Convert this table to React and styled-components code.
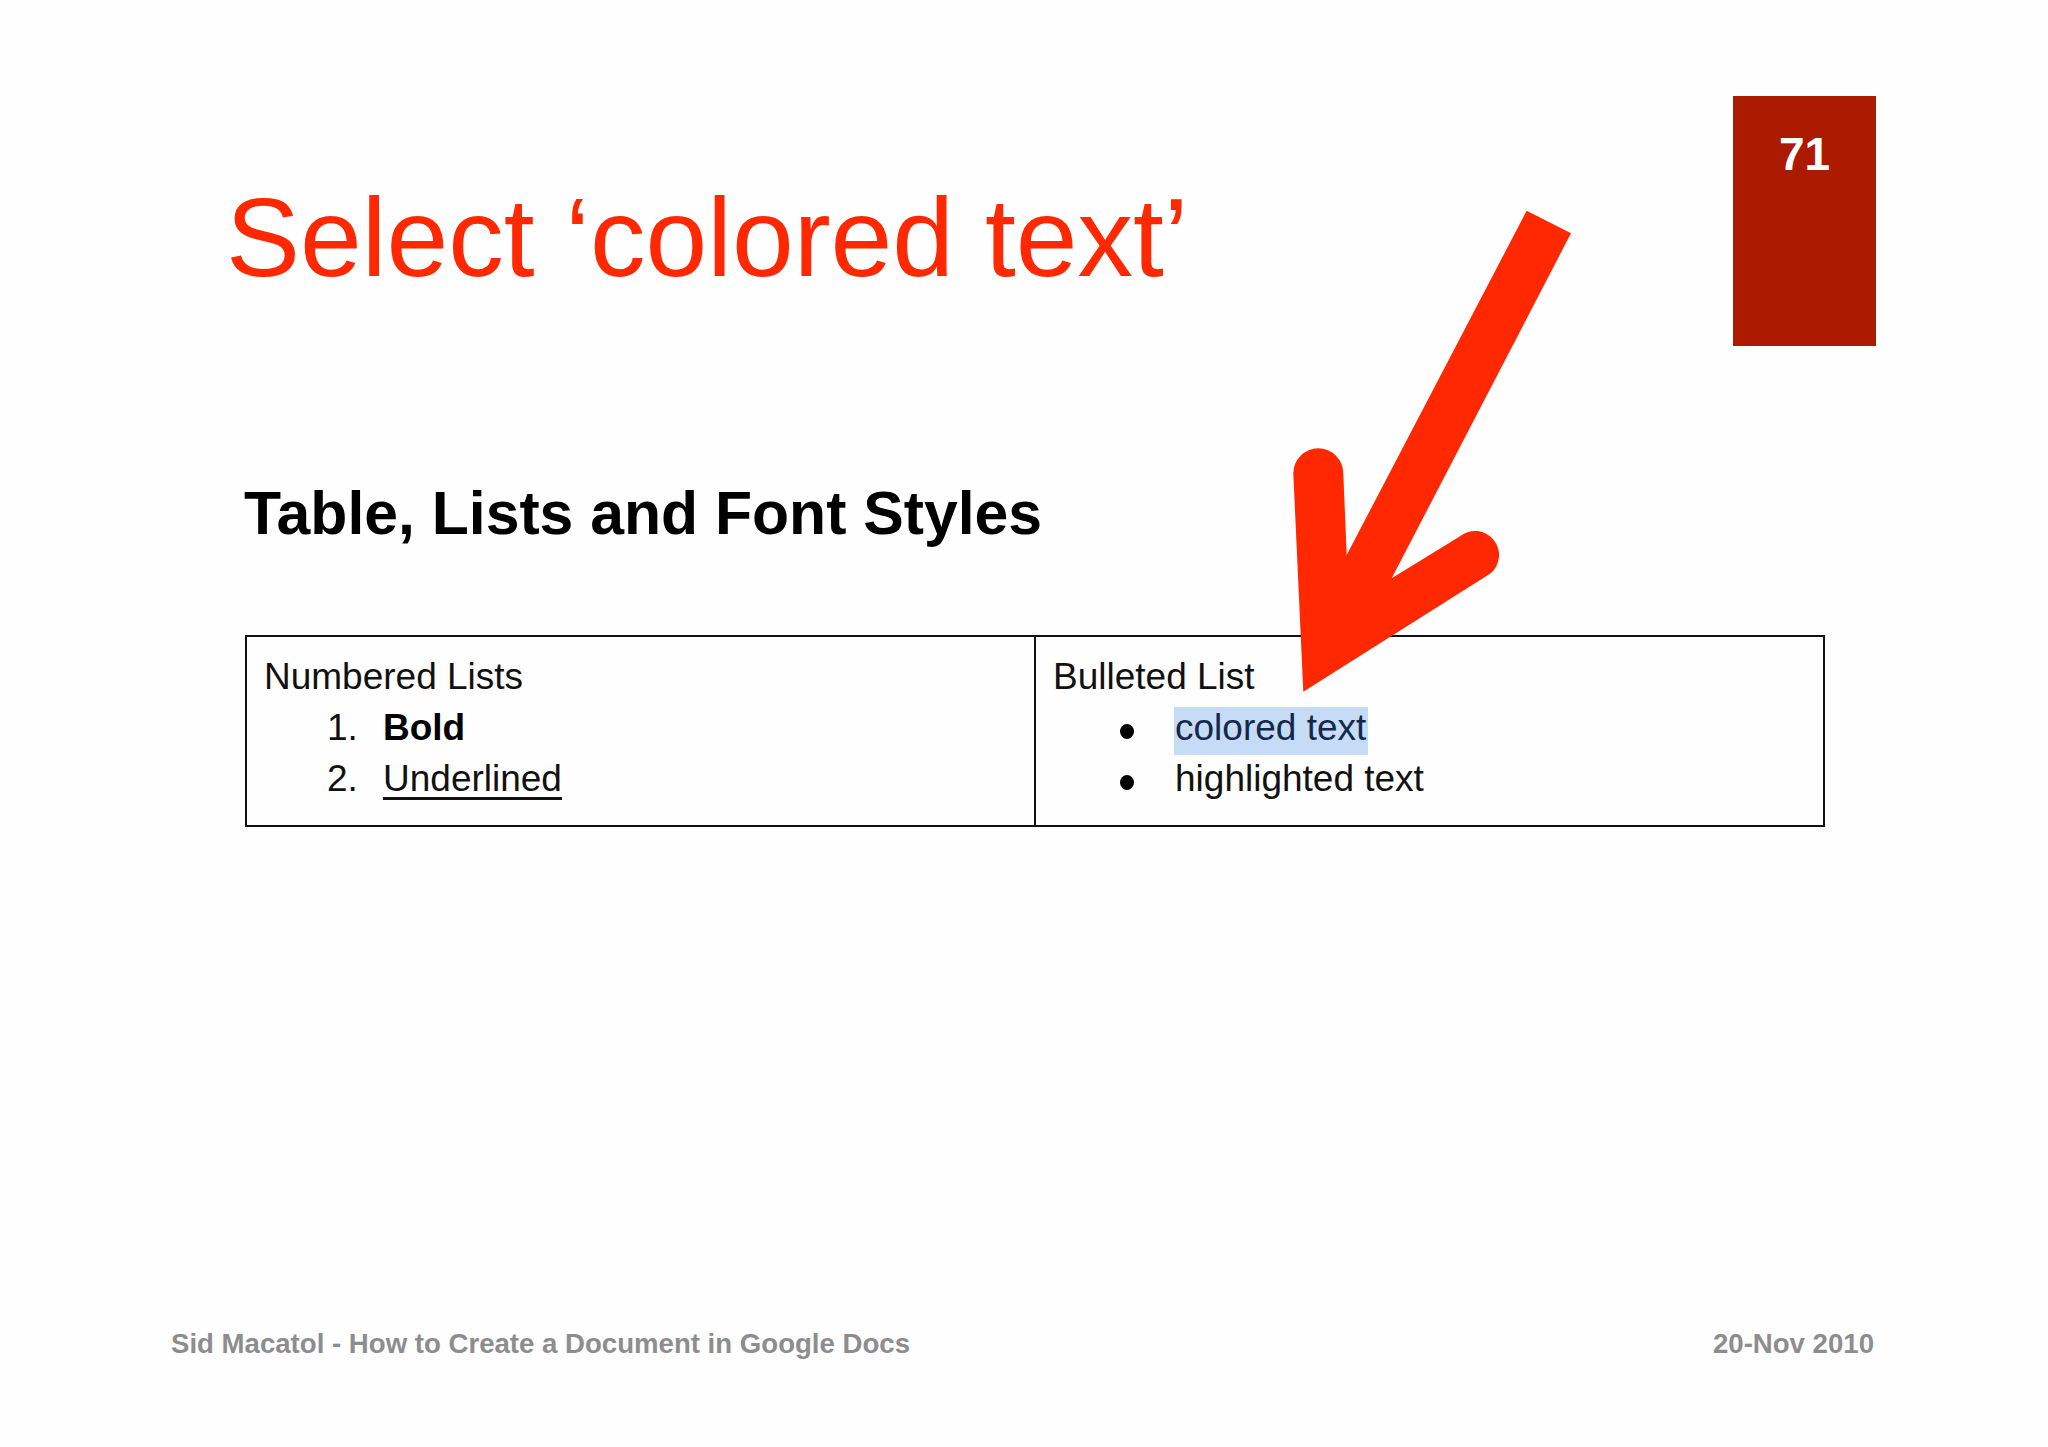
import React from "react";
import styled, { createGlobalStyle } from "styled-components";

const GlobalStyle = createGlobalStyle`
  html, body {
    margin: 0;
    padding: 0;
    background: #fefefe;
  }
  body {
    font-family: "Liberation Sans", Arial, sans-serif;
  }
`;

const Slide = styled.div`
  position: relative;
  width: 2048px;
  height: 1447px;
  box-sizing: border-box;
  display: flex;
  flex-direction: column;
  background: #fefefe;
  overflow: hidden;
`;

const Header = styled.div`
  display: flex;
  justify-content: space-between;
  align-items: flex-start;
  padding: 0 172px 0 226px;
`;

const Title = styled.h1`
  margin: 182px 0 0 0;
  font-size: 111px;
  line-height: 112px;
  font-weight: 400;
  color: #ff2800;
  white-space: nowrap;
`;

const PageNumber = styled.div`
  margin-top: 96px;
  width: 143px;
  height: 250px;
  box-sizing: border-box;
  padding-top: 35px;
  background: #ac1a02;
  color: #fff;
  font-size: 46px;
  line-height: 46px;
  font-weight: 700;
  text-align: center;
`;

const Heading = styled.h2`
  margin: 137px 0 0 244px;
  font-size: 60.7px;
  line-height: 60px;
  font-weight: 700;
  color: #000;
  white-space: nowrap;
`;

const Table = styled.div`
  margin: 92px 0 0 245px;
  width: 1580px;
  height: 192px;
  box-sizing: border-box;
  border: 2px solid #111;
  display: grid;
  grid-template-columns: 787px 1fr;
`;

const Cell = styled.div`
  padding: 14px 0 0 17px;
  font-size: 37px;
  line-height: 51px;
  color: #111;
  border-left: ${(p) => (p.divider ? "2px solid #111" : "none")};
`;

const CellTitle = styled.div`
  white-space: nowrap;
`;

const Item = styled.div`
  display: flex;
  align-items: baseline;
  height: 51px;
  padding-left: ${(p) => p.indent}px;
  white-space: nowrap;
`;

const Marker = styled.span`
  display: inline-block;
  width: ${(p) => p.width}px;
  flex: none;
`;

const Label = styled.span`
  display: block;
`;

const Dot = styled.span`
  display: inline-block;
  width: 14px;
  height: 15px;
  border-radius: 50%;
  background: #000;
  margin-left: 1px;
  vertical-align: 1px;
`;

const BoldText = styled.span`
  font-weight: 700;
  color: #000;
`;

const Underlined = styled.span`
  text-decoration: underline;
  text-decoration-thickness: 3px;
  text-underline-offset: 6px;
`;

const Selected = styled.span`
  background: #c5dbf6;
  color: #14284a;
  padding: 0 2px 7px 1px;
  margin-left: -1px;
`;

const Footer = styled.div`
  margin-top: auto;
  padding: 0 174px 90px 171px;
  display: flex;
  justify-content: space-between;
  font-size: 27.6px;
  line-height: 27px;
  font-weight: 700;
  color: #8d8d90;
  white-space: nowrap;
`;

const Arrow = styled.svg`
  position: absolute;
  left: 1280px;
  top: 200px;
  width: 310px;
  height: 510px;
`;

function RedArrow() {
  return (
    <Arrow viewBox="0 0 310 510">
      <path
        fill="#ff2800"
        d="M246.7 10.7 L291 33.3 L111.7 378.3 L180 336.2 A24 24 0 0 1 210 373.8 L23.3 491.7 L13.3 273.3 A25 25 0 0 1 63.3 273.3 L66.7 355 Z"
      />
    </Arrow>
  );
}

export default function App() {
  return (
    <>
      <GlobalStyle />
      <Slide>
        <Header>
          <Title>Select ‘colored text’</Title>
          <PageNumber>71</PageNumber>
        </Header>
        <Heading>Table, Lists and Font Styles</Heading>
        <Table>
          <Cell>
            <CellTitle>Numbered Lists</CellTitle>
            <Item indent={63}>
              <Marker width={56}>1.</Marker>
              <Label>
                <BoldText>Bold</BoldText>
              </Label>
            </Item>
            <Item indent={63}>
              <Marker width={56}>2.</Marker>
              <Label>
                <Underlined>Underlined</Underlined>
              </Label>
            </Item>
          </Cell>
          <Cell divider>
            <CellTitle>Bulleted List</CellTitle>
            <Item indent={66}>
              <Marker width={56}>
                <Dot />
              </Marker>
              <Label>
                <Selected>colored text</Selected>
              </Label>
            </Item>
            <Item indent={66}>
              <Marker width={56}>
                <Dot />
              </Marker>
              <Label>highlighted text</Label>
            </Item>
          </Cell>
        </Table>
        <Footer>
          <span>Sid Macatol - How to Create a Document in Google Docs</span>
          <span>20-Nov 2010</span>
        </Footer>
        <RedArrow />
      </Slide>
    </>
  );
}
